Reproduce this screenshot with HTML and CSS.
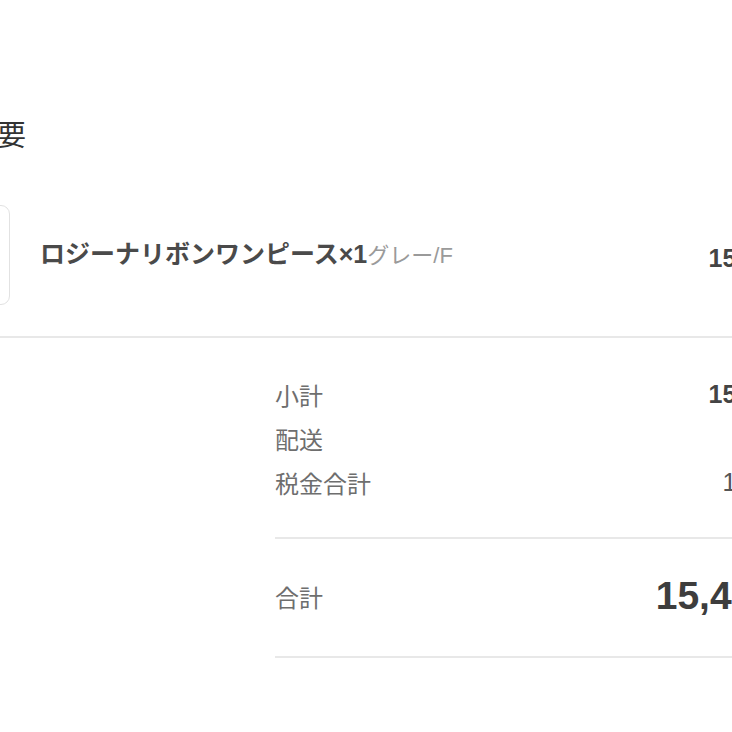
FILE: index.html
```html
<!DOCTYPE html>
<html lang="ja">
<head>
<meta charset="utf-8">
<title>注文概要</title>
<link rel="stylesheet" href="styles.css">
</head>
<body>
<div class="page">
  <h2 class="heading">注文概要</h2>
  <div class="product">
    <div class="thumb"></div>
    <div class="product-info">
      <span class="product-name">ロジーナリボンワンピース×1</span><span class="variant">グレー/F</span>
    </div>
    <div class="product-price">15,400</div>
  </div>
  <div class="summary">
    <div class="rows">
      <div class="row"><span class="label">小計</span><span class="value">15,400</span></div>
      <div class="row"><span class="label">配送</span><span class="value muted">無料</span></div>
      <div class="row"><span class="label">税金合計</span><span class="value tax">1,400</span></div>
    </div>
    <div class="total">
      <span class="label">合計</span><span class="total-value">15,400</span>
    </div>
  </div>
</div>
</body>
</html>
```
FILE: styles.css
```css
html, body {
  margin: 0;
  padding: 0;
  background: #ffffff;
  overflow: hidden;
  width: 732px;
  height: 732px;
}

body {
  font-family: "Liberation Sans", "Noto Sans CJK JP", sans-serif;
  color: #4a4a4a;
}

.page {
  width: 875px;
  margin-left: -90px;
  padding-top: 118px;
}

.heading {
  margin: 0;
  font-size: 29px;
  font-weight: 400;
  line-height: 36px;
  color: #333333;
}

.product {
  display: flex;
  align-items: center;
  margin-top: 51px;
  padding-bottom: 31px;
  border-bottom: 2px solid #e8e8e8;
  margin-right: -200px;
}

.thumb {
  width: 98px;
  height: 98px;
  border: 1px solid #e2e2e2;
  border-radius: 9px;
  flex: none;
}

.product-info {
  flex: 1;
  margin-left: 30px;
  font-size: 25px;
  line-height: 32px;
}

.product-name {
  font-weight: 700;
  color: #4a4a4a;
}

.variant {
  font-size: 22px;
  color: #9a9a9a;
}

.product-price {
  font-size: 25px;
  font-weight: 700;
  color: #444444;
  margin-right: 200px;
  padding-top: 6px;
}

.summary {
  margin-left: 365px;
}

.rows {
  padding-top: 34px;
  padding-bottom: 33px;
  border-bottom: 2px solid #e8e8e8;
}

.row {
  display: flex;
  justify-content: space-between;
  align-items: center;
  height: 44px;
}

.label {
  font-size: 24px;
  color: #6e6e6e;
}

.value {
  font-size: 25px;
  font-weight: 700;
  color: #444444;
}

.value.muted {
  font-weight: 400;
  color: #6e6e6e;
}

.value.tax {
  font-weight: 400;
  color: #555555;
}

.total {
  display: flex;
  justify-content: space-between;
  align-items: center;
  height: 42px;
  padding: 36px 0 39px;
  border-bottom: 2px solid #e8e8e8;
}

.total-value {
  font-size: 39px;
  font-weight: 700;
  color: #3d3d3d;
  margin-right: 10px;
}
```
